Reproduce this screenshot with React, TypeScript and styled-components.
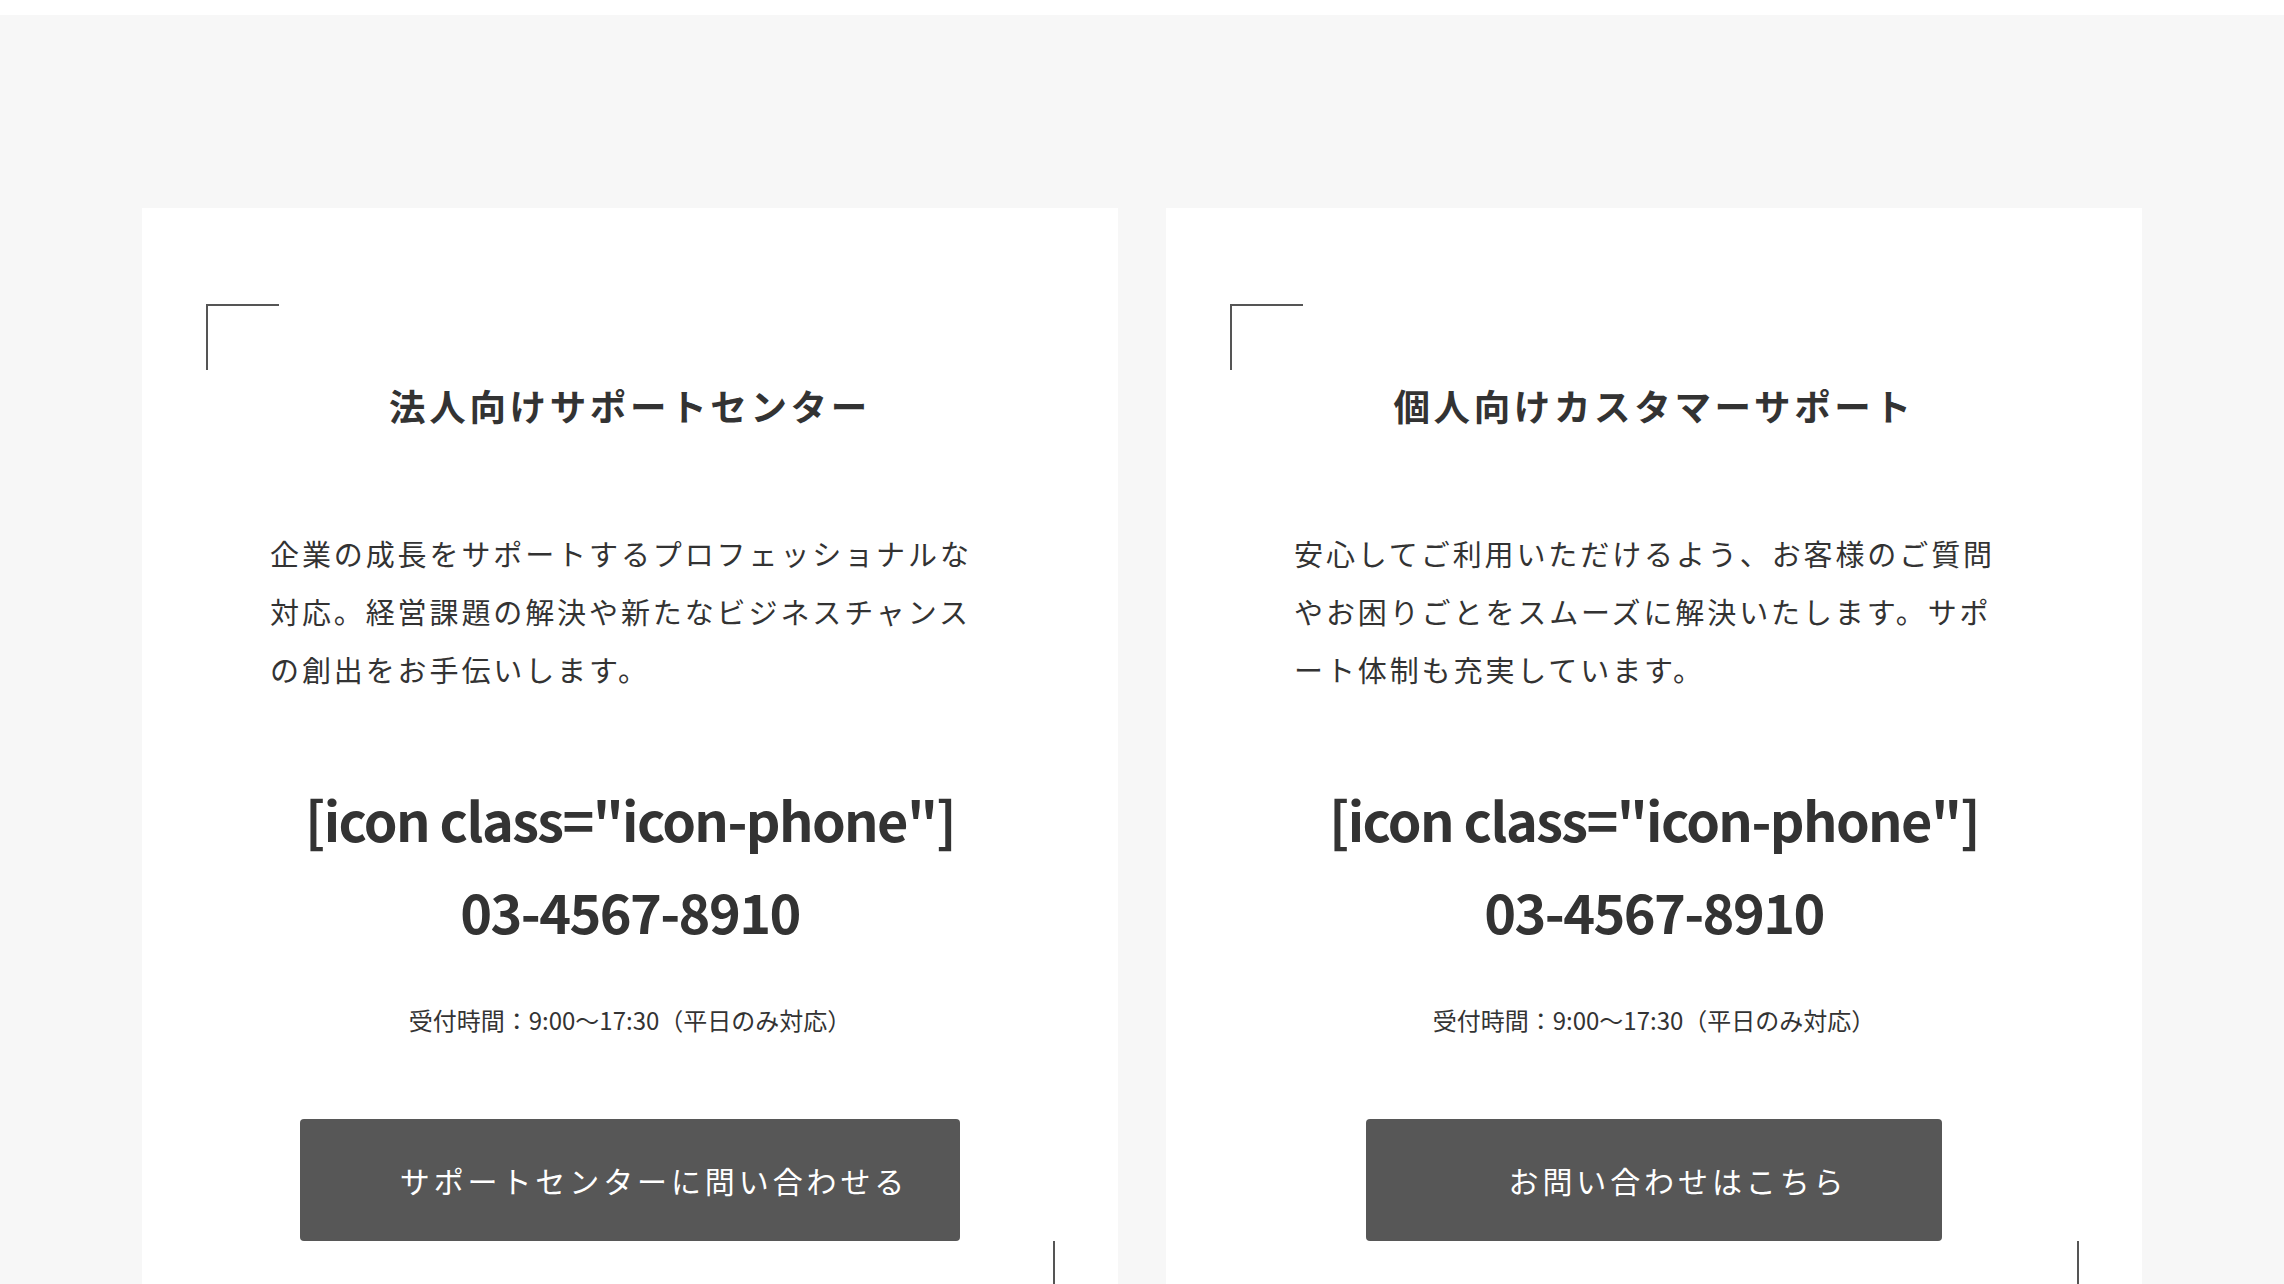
import React from "react";
import styled, { createGlobalStyle } from "styled-components";

const GlobalStyle = createGlobalStyle`
  html, body {
    margin: 0;
    padding: 0;
    background: #ffffff;
  }
  body {
    font-family: "Noto Sans CJK JP", "Noto Sans", sans-serif;
    color: #333333;
  }
  * { box-sizing: border-box; }
`;

const Page = styled.div`
  padding-top: 15px;
  background: #ffffff;
`;

const Section = styled.section`
  background: #f7f7f7;
  padding: 193px 142px 120px;
`;

const Grid = styled.div`
  display: grid;
  grid-template-columns: 1fr 1fr;
  gap: 48px;
  max-width: 2000px;
  margin: 0 auto;
`;

const Card = styled.article`
  position: relative;
  background: #ffffff;
  padding: 171px 128px 162px;
  display: flex;
  flex-direction: column;
  align-items: center;
`;

const CornerTop = styled.span`
  position: absolute;
  top: 96px;
  left: 64px;
  width: 73px;
  height: 66px;
  border-top: 2px solid #555555;
  border-left: 2px solid #555555;
`;

const CornerBottom = styled.span`
  position: absolute;
  bottom: 96px;
  right: 63px;
  width: 73px;
  height: 66px;
  border-bottom: 2px solid #555555;
  border-right: 2px solid #555555;
`;

const Title = styled.h2`
  margin: 0;
  font-size: 36.5px;
  line-height: 54px;
  font-weight: 700;
  letter-spacing: 0.1em;
  color: #333333;
  text-align: center;
`;

const Description = styled.p`
  margin: 91px 0 0;
  align-self: stretch;
  font-size: 29px;
  line-height: 58px;
  font-weight: 400;
  letter-spacing: 0.1em;
  color: #333333;
  text-align: left;
  line-break: loose;
`;

const Phone = styled.p`
  margin: 75px 0 0;
  font-size: 54px;
  line-height: 92px;
  font-weight: 700;
  letter-spacing: -1.6px;
  color: #333333;
  text-align: center;
`;

const Hours = styled.p`
  margin: 45px 0 0;
  font-size: 24px;
  line-height: 36px;
  font-weight: 400;
  color: #333333;
  text-align: center;
`;

const Button = styled.a`
  margin-top: 81px;
  display: inline-flex;
  align-items: center;
  justify-content: center;
  min-width: 576px;
  height: 122px;
  padding: 0 52px 0 100px;
  background: #575757;
  border-radius: 4px;
  color: #ffffff;
  font-size: 30px;
  font-weight: 400;
  letter-spacing: 0.13em;
  text-decoration: none;
  cursor: pointer;
`;

type CardData = {
  title: string;
  description: string;
  phone: string;
  hours: string;
  cta: string;
};

const cards: CardData[] = [
  {
    title: "法人向けサポートセンター",
    description:
      "企業の成長をサポートするプロフェッショナルな対応。経営課題の解決や新たなビジネスチャンスの創出をお手伝いします。",
    phone: "03-4567-8910",
    hours: "受付時間：9:00〜17:30（平日のみ対応）",
    cta: "サポートセンターに問い合わせる",
  },
  {
    title: "個人向けカスタマーサポート",
    description:
      "安心してご利用いただけるよう、お客様のご質問やお困りごとをスムーズに解決いたします。サポート体制も充実しています。",
    phone: "03-4567-8910",
    hours: "受付時間：9:00〜17:30（平日のみ対応）",
    cta: "お問い合わせはこちら",
  },
];

const SupportCard: React.FC<{ data: CardData }> = ({ data }) => (
  <Card>
    <CornerTop />
    <Title>{data.title}</Title>
    <Description>{data.description}</Description>
    <Phone>
      [icon class="icon-phone"]
      <br />
      {data.phone}
    </Phone>
    <Hours>{data.hours}</Hours>
    <Button href="#">{data.cta}</Button>
    <CornerBottom />
  </Card>
);

export default function App() {
  return (
    <>
      <GlobalStyle />
      <Page>
        <Section>
          <Grid>
            {cards.map((c) => (
              <SupportCard key={c.title} data={c} />
            ))}
          </Grid>
        </Section>
      </Page>
    </>
  );
}
